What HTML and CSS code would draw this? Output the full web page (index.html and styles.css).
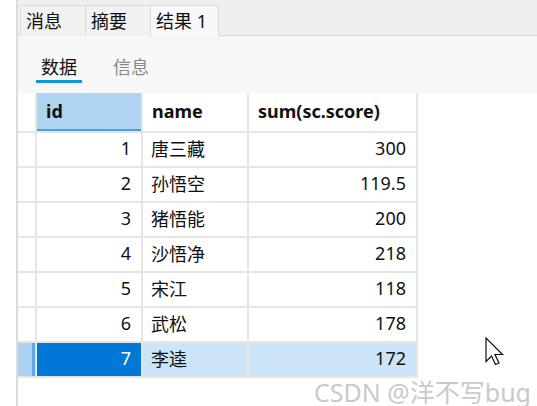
FILE: index.html
```html
<!DOCTYPE html>
<html lang="zh">
<head>
<meta charset="utf-8">
<link rel="stylesheet" href="styles.css">
</head>
<body>
<div class="app">
  <div class="gutter"></div>
  <div class="main">
    <div class="tabbar">
      <div class="tab t1">消息</div>
      <div class="tab t2">摘要</div>
      <div class="tab active">结果 1</div>
    </div>
    <div class="subbar">
      <div class="subtab on">数据</div>
      <div class="subtab">信息</div>
    </div>
    <div class="content">
      <div class="grid">
        <div class="rh"></div>
        <div class="hd sel">id</div>
        <div class="hd">name</div>
        <div class="hd">sum(sc.score)</div>

        <div class="rh"></div><div class="num">1</div><div class="txt">唐三藏</div><div class="num">300</div>
        <div class="rh"></div><div class="num">2</div><div class="txt">孙悟空</div><div class="num">119.5</div>
        <div class="rh"></div><div class="num">3</div><div class="txt">猪悟能</div><div class="num">200</div>
        <div class="rh"></div><div class="num">4</div><div class="txt">沙悟净</div><div class="num">218</div>
        <div class="rh"></div><div class="num">5</div><div class="txt">宋江</div><div class="num">118</div>
        <div class="rh"></div><div class="num">6</div><div class="txt">武松</div><div class="num">178</div>
        <div class="rh rsel"></div><div class="num cur">7</div><div class="txt rowsel">李逵</div><div class="num rowsel">172</div>
      </div>
    </div>
  </div>
  <div class="watermark">CSDN @洋不写bug</div>
  <svg class="cursor" width="20" height="29" viewBox="0 0 20 29">
    <path d="M1 1 V24.5 L6.5 19 L10.5 27.5 L14 26 L10 17.5 H17.5 Z" fill="#fff" stroke="#111" stroke-width="1.2" stroke-linejoin="miter"/>
  </svg>
</div>
</body>
</html>
```
FILE: styles.css
```css
* { box-sizing: border-box; }
html, body { margin: 0; padding: 0; background: #fff; }
body {
  font-family: "Noto Sans", "Noto Sans CJK SC", sans-serif;
  font-size: 18px;
  color: #111;
}
.app {
  position: relative;
  width: 537px;
  height: 406px;
  display: flex;
  overflow: hidden;
}
.gutter { width: 16px; background: #fff; }
.main {
  flex: 1;
  display: flex;
  flex-direction: column;
  border-left: 2px solid #dcdcdc;
}
.tabbar {
  height: 36px;
  padding: 5px 0 0 2px;
  background: #efefef;
  border-bottom: 1px solid #dcdcdc;
  display: flex;
  align-items: stretch;
}
.tab {
  height: 31px;
  padding-left: 5px;
  line-height: 31px;
  background: #f1f1f1;
  border: 1px solid #dcdcdc;
  border-bottom: none;
  margin-right: -1px;
  white-space: nowrap;
}
.t1 { width: 66px; }
.t2 { width: 66px; }
.tab.active {
  width: 69px;
  height: 32px;
  background: #f8f8f8;
  position: relative;
  z-index: 1;
}
.subbar {
  height: 57px;
  background: #f7f7f7;
  padding-left: 18px;
  display: flex;
  gap: 26px;
  align-items: flex-start;
}
.subtab {
  margin-top: 19px;
  line-height: 25px;
  padding: 0 5px;
  color: #8a8a8a;
  border-bottom: 3px solid transparent;
}
.subtab.on {
  color: #111;
  border-bottom-color: #0c9be3;
}
.content {
  flex: 1;
  background: #fff;
}
.grid {
  display: grid;
  grid-template-columns: 17px 104px 104px 167px;
  grid-template-rows: 38px;
  grid-auto-rows: 33px;
  gap: 2px;
  padding: 0 2px 2px 0;
  width: max-content;
  background: #e6e6e6;
}
.grid > div {
  background: #fff;
  display: flex;
  align-items: center;
  white-space: nowrap;
  padding-bottom: 3px;
}
.hd {
  font-weight: bold;
  padding-left: 9px;
}
.hd.sel {
  background: #afd4f2 !important;
  box-shadow: inset 0 -2px 0 #4a9de6;
}
.num {
  justify-content: flex-end;
  padding-right: 10px;
}
.txt { padding-left: 8px; }
.grid > .rsel {
  background: #acd3f2;
  box-shadow: inset -3px 0 0 #5ca6ea;
}
.grid > .cur { background: #0078d7; color: #fff; }
.grid > .rowsel { background: #cce4f7; }
.watermark {
  position: absolute;
  left: 314px;
  top: 373px;
  font-size: 25px;
  color: #cacaca;
  white-space: nowrap;
  font-family: "Noto Sans", "Noto Sans CJK SC", sans-serif;
}
.cursor {
  position: absolute;
  left: 485px;
  top: 337px;
}
```
